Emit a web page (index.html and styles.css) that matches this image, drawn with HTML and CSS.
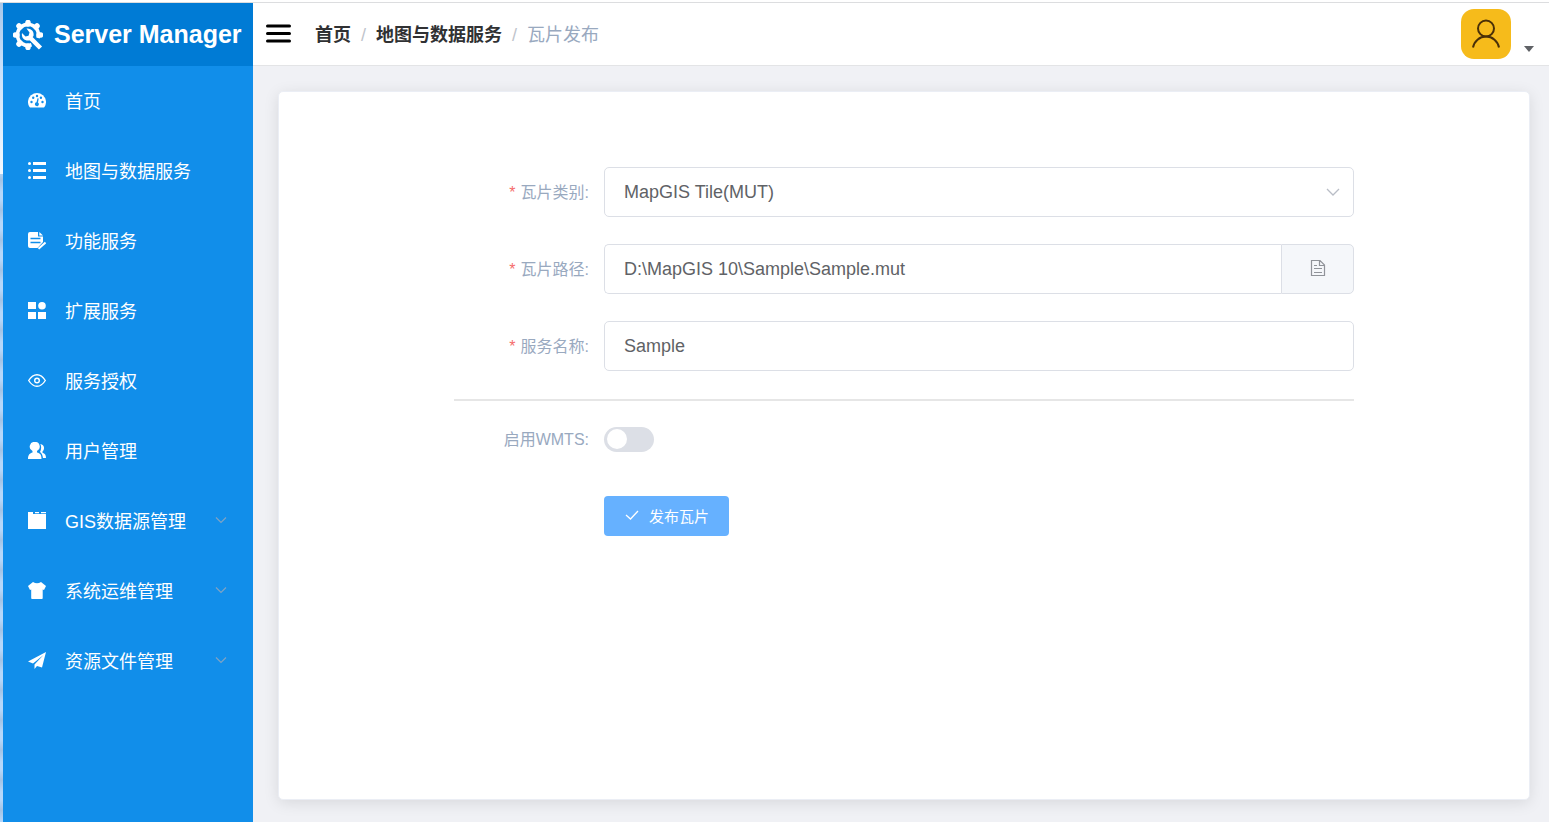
FILE: index.html
```html
<!DOCTYPE html>
<html lang="zh-CN">
<head>
<meta charset="utf-8">
<title>Server Manager</title>
<link rel="stylesheet" href="styles.css">
</head>
<body>
<div class="app">
  <aside class="sidebar">
    <div class="brand">
      <svg class="brand-icon" viewBox="0 0 30 30" aria-hidden="true">
        <g fill="none" stroke="#fff">
          <path d="M18.500 24.800A10.500 10.500 0 1 1 25 18" stroke-width="3.600"/>
          <path d="M15 4V2.500M7 7L6 6M4 15H2.500M7 23L6 24M15 26V27.500M23 7L24 6M26 15H27.500" stroke-width="5.500" stroke-linecap="round"/>
          <path d="M17 17.500L27.500 28" stroke-width="4.500"/>
        </g>
        <path fill="#fff" d="M13.500 8.500C18.500 8 21.500 12 20.500 16L16.500 20.500C12 21.300 8 18 9 13L12.500 16.500L15.500 15.800L16.500 12.500Z"/>
      </svg>
      <span>Server Manager</span>
    </div>
    <nav class="menu">
      <a class="menu-item" href="#">
        <svg class="menu-icon" viewBox="0 0 18 18"><path fill="#fff" d="M1.500 15A9 9 0 1 1 16.500 15Q16 15.500 15 15.500H3Q2 15.500 1.500 15Z"/><g fill="#118eea"><circle cx="3.500" cy="10" r="1.200"/><circle cx="5.200" cy="5.700" r="1.200"/><circle cx="9" cy="4" r="1.200"/><circle cx="12.900" cy="5.700" r="1.200"/><circle cx="14.500" cy="10" r="1.200"/><path d="M9.500 6.200L10.700 6.500L10 10.500A2 2 0 1 1 8.500 10.200Z"/></g></svg>
        <span>首页</span></a>
      <a class="menu-item" href="#">
        <svg class="menu-icon" viewBox="0 0 18 18" fill="#fff"><circle cx="1.500" cy="1.500" r="1.500"/><circle cx="1.500" cy="8.500" r="1.500"/><circle cx="1.500" cy="15.500" r="1.500"/><path d="M5 0H18V3H5ZM5 7H18V10H5ZM5 14H18V17H5Z"/></svg>
        <span>地图与数据服务</span></a>
      <a class="menu-item" href="#">
        <svg class="menu-icon" viewBox="0 0 18 18"><path fill="#fff" d="M2 0H10V4.500H15V10L9.500 16H2Q0 16 0 14V2Q0 0 2 0ZM11.300 0L15 3.500H11.300Z"/><path d="M2.500 6.500H12.500M2.500 10.500H12.500" stroke="#118eea" stroke-width="1.300"/><path d="M10.500 16.800L17.500 10.500" stroke="#fff" stroke-width="2"/></svg>
        <span>功能服务</span></a>
      <a class="menu-item" href="#">
        <svg class="menu-icon" viewBox="0 0 18 18" fill="#fff"><path d="M0 0H8V7H0ZM0 10H8V17H0ZM10 10H18V17H10Z"/><circle cx="14" cy="3.800" r="3.800"/></svg>
        <span>扩展服务</span></a>
      <a class="menu-item" href="#">
        <svg class="menu-icon" viewBox="0 0 18 18" fill="none" stroke="#fff" stroke-width="1.400"><path d="M.7 8.500Q4.300 2.700 9 2.700T17.300 8.500Q13.700 14.300 9 14.300T.7 8.500Z"/><circle cx="9" cy="8.500" r="2.300"/></svg>
        <span>服务授权</span></a>
      <a class="menu-item" href="#">
        <svg class="menu-icon" viewBox="0 0 18 18" fill="#fff"><path d="M6.800 0A4.500 4.700 0 0 1 9 9V10.500C12 11.200 13.500 12.500 13.500 17H0C0 12.500 2 11.200 4.500 10.500V9A4.500 4.700 0 0 1 6.800 0Z"/><path d="M12.300 2C17 2.500 16.800 8 14.500 9.500V10.700C17 11.500 18 13 18 16H15C14.700 13 13.500 11 12 10C13.500 7.500 13.500 4 12.300 2Z"/></svg>
        <span>用户管理</span></a>
      <a class="menu-item" href="#">
        <svg class="menu-icon" viewBox="0 0 18 18" fill="#fff"><path d="M0 0H5V2H18V17H0ZM7 0H11V1.200H7ZM13 0H18V1.200H13Z"/></svg>
        <span>GIS数据源管理</span>
        <svg class="menu-arrow" viewBox="0 0 12 12"><path d="M1 3.500L6 8.500L11 3.500"/></svg></a>
      <a class="menu-item" href="#">
        <svg class="menu-icon" viewBox="0 0 18 18" fill="#fff"><path d="M5 0Q9 2.500 13 0L18 4L16 8L14.700 7.500V16Q14.700 17 14 17H4Q3.200 17 3.200 16V7.500L2 8L0 4Z"/></svg>
        <span>系统运维管理</span>
        <svg class="menu-arrow" viewBox="0 0 12 12"><path d="M1 3.500L6 8.500L11 3.500"/></svg></a>
      <a class="menu-item" href="#">
        <svg class="menu-icon" viewBox="0 0 18 18" fill="#fff"><path d="M18 0L0 9.500L5 11.500L15.500 3L6.500 12.500V17L9 14L14 15.500Z"/></svg>
        <span>资源文件管理</span>
        <svg class="menu-arrow" viewBox="0 0 12 12"><path d="M1 3.500L6 8.500L11 3.500"/></svg></a>
    </nav>
  </aside>
  <div class="page">
    <header class="topbar">
      <button class="toggle" type="button" aria-label="菜单"><svg viewBox="0 0 25 20"><path d="M1.500 2H23.500M1.500 9.500H23.500M1.500 17H23.500"/></svg></button>
      <nav class="crumbs" aria-label="breadcrumb">
        <a href="#">首页</a><span class="sep">/</span><a href="#">地图与数据服务</a><span class="sep">/</span><span class="current">瓦片发布</span>
      </nav>
      <button class="user" type="button" aria-label="用户">
        <svg class="avatar" viewBox="0 0 50 50"><circle cx="25" cy="19.500" r="8"/><path d="M12 38.500A13.200 13.200 0 0 1 38 38.500"/></svg>
        <svg class="caret" viewBox="0 0 10 6"><path d="M0 0H10L5 6Z"/></svg>
      </button>
    </header>
    <main class="content">
      <form class="card">
        <div class="fields">
          <div class="row">
            <label class="label required" for="type">瓦片类别:</label>
            <div class="control">
              <select class="input" id="type"><option>MapGIS Tile(MUT)</option></select>
              <svg class="select-arrow" viewBox="0 0 14 14"><path d="M1 4L7 10L13 4"/></svg>
            </div>
          </div>
          <div class="row">
            <label class="label required" for="path">瓦片路径:</label>
            <div class="control group">
              <input class="input" id="path" type="text" value="D:\MapGIS 10\Sample\Sample.mut">
              <button class="browse" type="button" aria-label="选择文件"><svg viewBox="0 0 16 18"><path d="M1.500 1.500H10L14.500 6V16.500H1.500ZM9.500 1.500V6.500H14.500M4 6.500H7M4 9.500H12M4 13.500H12"/></svg></button>
            </div>
          </div>
          <div class="row">
            <label class="label required" for="name">服务名称:</label>
            <div class="control"><input class="input" id="name" type="text" value="Sample"></div>
          </div>
        </div>
        <hr class="divider">
        <div class="row">
          <label class="label" for="wmts">启用WMTS:</label>
          <input class="switch" id="wmts" type="checkbox" role="switch">
        </div>
        <div class="actions">
          <button class="submit" type="button"><svg viewBox="0 0 14 14"><path d="M1 7L5.500 11L13 3"/></svg><span>发布瓦片</span></button>
        </div>
      </form>
    </main>
  </div>
</div>
</body>
</html>
```
FILE: styles.css
```css
* {
  box-sizing: border-box;
}

body {
  margin: 0;
  background: #f0f1f5;
  font-family: "Liberation Sans", "Noto Sans CJK SC", sans-serif;
  color: #606266;
}

button,
input,
select {
  margin: 0;
  font-family: inherit;
}

svg {
  display: block;
  flex: none;
}

.app {
  display: flex;
  min-height: 100vh;
  padding-top: 2px;
  background:
    linear-gradient(#fff 2px, #dcdddf 2px, #dcdddf 3px, transparent 3px),
    linear-gradient(#a5c6e8, #c4defa 60px, #f4f9ff 174px, transparent 174px) left / 3px 100% no-repeat,
    repeating-linear-gradient(#a3c3e5 0, #b5d7fa 12px, #b5d7fa 20px, #a3c3e5 30px) left / 3px 100% no-repeat,
    #f0f1f5;
}

.sidebar {
  width: 250px;
  flex: none;
  margin: 1px 0 0 3px;
  background: #118eea;
}

.brand {
  display: flex;
  align-items: center;
  gap: 11px;
  height: 63px;
  padding-left: 10px;
  background: #007bd5;
  color: #fff;
  font-size: 25px;
  font-weight: bold;
  white-space: nowrap;
}

.brand-icon {
  width: 30px;
  height: 30px;
}

.menu {
  display: flex;
  flex-direction: column;
}

.menu-item {
  display: flex;
  align-items: center;
  gap: 19px;
  height: 70px;
  padding: 0 26px 0 25px;
  color: #fff;
  font-size: 18px;
  text-decoration: none;
  white-space: nowrap;
}

.menu-item span {
  padding-bottom: 2px;
}

.menu-icon {
  width: 18px;
  height: 18px;
}

.menu-arrow {
  width: 12px;
  height: 12px;
  margin-left: auto;
  margin-bottom: 2px;
  fill: none;
  stroke: #7fa3c4;
  stroke-width: 1.2;
}

.page {
  display: flex;
  flex: 1;
  flex-direction: column;
  min-width: 0;
}

.topbar {
  display: flex;
  align-items: center;
  height: 64px;
  padding: 0 15px 0 13px;
  border-top: 1px solid #dcdddf;
  border-bottom: 1px solid #e3e4e6;
  background: #fff;
}

.toggle {
  padding: 0;
  border: 0;
  background: none;
}

.toggle svg {
  width: 25px;
  height: 20px;
  fill: none;
  stroke: #000;
  stroke-width: 3;
  stroke-linecap: round;
}

.crumbs {
  display: flex;
  align-items: baseline;
  padding: 0 0 3px 24px;
  font-size: 18px;
  white-space: nowrap;
}

.crumbs a {
  color: #303133;
  font-weight: bold;
  text-decoration: none;
}

.sep {
  margin: 0 10px;
  color: #c0c4cc;
}

.current {
  color: #99a9bf;
}

.user {
  display: flex;
  align-items: flex-end;
  gap: 13px;
  margin-left: auto;
  padding: 0;
  border: 0;
  background: none;
}

.avatar {
  width: 50px;
  height: 50px;
  border-radius: 13px;
  background: #f6bb1b;
  fill: none;
  stroke: #4a3008;
  stroke-width: 2;
}

.caret {
  width: 10px;
  height: 6px;
  margin-bottom: 7px;
  fill: #606266;
}

.content {
  display: flex;
  flex: 1;
  padding: 25px 19px 22px 25px;
}

.card {
  flex: 1;
  padding: 75px 175px 40px;
  border: 1px solid #ebeef5;
  border-radius: 5px;
  background: #fff;
  box-shadow: 0 3px 15px rgba(0, 0, 0, 0.1);
}

.fields {
  display: flex;
  flex-direction: column;
  gap: 27px;
}

.row {
  display: flex;
  align-items: center;
}

.label {
  width: 150px;
  flex: none;
  padding: 0 15px 3px 0;
  color: #99a9bf;
  font-size: 16px;
  text-align: right;
}

.required::before {
  content: "*";
  margin-right: 5px;
  color: #f56c6c;
}

.control {
  position: relative;
  flex: 1;
}

.group {
  display: flex;
}

.input {
  display: block;
  width: 100%;
  height: 50px;
  padding: 0 19px;
  border: 1px solid #dcdfe6;
  border-radius: 5px;
  background: #fff;
  color: #606266;
  font-size: 18px;
  appearance: none;
}

.group .input {
  flex: 1;
  border-right: 0;
  border-radius: 5px 0 0 5px;
}

.select-arrow {
  position: absolute;
  top: 18px;
  right: 14px;
  width: 14px;
  height: 14px;
  fill: none;
  stroke: #b9bdc6;
  stroke-width: 1.3;
  pointer-events: none;
}

.browse {
  display: flex;
  align-items: center;
  justify-content: center;
  width: 73px;
  flex: none;
  padding: 0 0 2px;
  border: 1px solid #dcdfe6;
  border-radius: 0 5px 5px 0;
  background: #f5f7fa;
}

.browse svg {
  width: 16px;
  height: 18px;
  fill: none;
  stroke: #909399;
  stroke-width: 1.2;
}

.divider {
  height: 2px;
  margin: 28px 0 25px;
  border: 0;
  background: #e6e6e6;
}

.switch {
  width: 50px;
  height: 25px;
  padding: 2px 3px;
  border-radius: 13px;
  background: #dcdfe6;
  appearance: none;
}

.switch::before {
  content: "";
  display: block;
  width: 20px;
  height: 20px;
  border-radius: 50%;
  background: #fff;
}

.switch:checked {
  background: #409eff;
}

.switch:checked::before {
  margin-left: auto;
}

.actions {
  padding: 43px 0 0 150px;
}

.submit {
  display: flex;
  align-items: center;
  gap: 10px;
  height: 40px;
  padding: 0 20px 2px 21px;
  border: 0;
  border-radius: 4px;
  background: #66b1ff;
  color: #fff;
  font-size: 15px;
}

.submit svg {
  width: 14px;
  height: 14px;
  fill: none;
  stroke: #fff;
  stroke-width: 1.3;
}
```
